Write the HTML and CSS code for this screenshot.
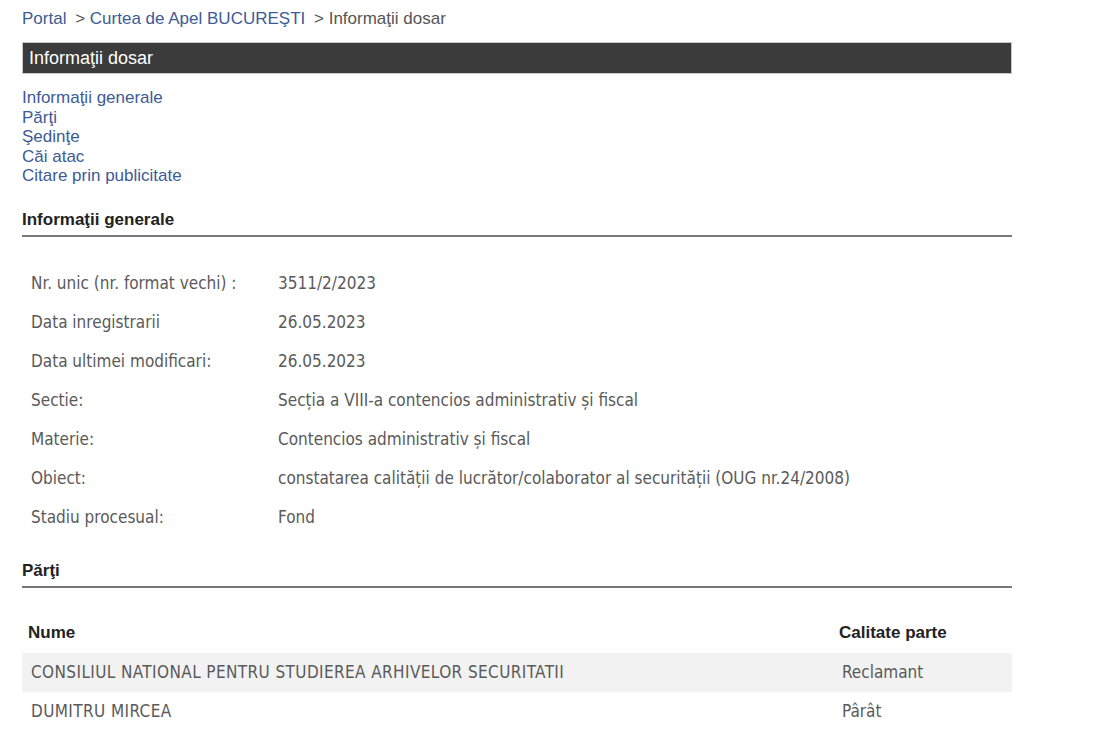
FILE: index.html
```html
<!DOCTYPE html>
<html lang="ro">
<head>
    <meta charset="UTF-8">
    <meta name="viewport" content="width=device-width, initial-scale=1.0">
    <title>Informaţii dosar</title>
    <link rel="stylesheet" href="styles.css">
</head>
<body>
    <div class="page">
        <div class="breadcrumb">
            <a href="#">Portal</a>
            <span class="sep">&gt;</span> <a href="#">Curtea de Apel BUCUREŞTI</a>
            <span class="sep">&gt;</span> <span class="current">Informaţii dosar</span>
        </div>

        <div class="title-bar">Informaţii dosar</div>

        <ul class="anchors">
            <li><a href="#generale">Informaţii generale</a></li>
            <li><a href="#parti">Părţi</a></li>
            <li><a href="#sedinte">Şedinţe</a></li>
            <li><a href="#cai">Căi atac</a></li>
            <li><a href="#citare">Citare prin publicitate</a></li>
        </ul>

        <h2 class="section-title" id="generale">Informaţii generale</h2>
        <table class="details">
            <tr><td class="label">Nr. unic (nr. format vechi) :</td><td>3511/2/2023</td></tr>
            <tr><td class="label">Data inregistrarii</td><td>26.05.2023</td></tr>
            <tr><td class="label">Data ultimei modificari:</td><td>26.05.2023</td></tr>
            <tr><td class="label">Sectie:</td><td>Secția a VIII-a contencios administrativ și fiscal</td></tr>
            <tr><td class="label">Materie:</td><td>Contencios administrativ și fiscal</td></tr>
            <tr><td class="label">Obiect:</td><td>constatarea calității de lucrător/colaborator al securității (OUG nr.24/2008)</td></tr>
            <tr><td class="label">Stadiu procesual:</td><td>Fond</td></tr>
        </table>

        <h2 class="section-title" id="parti">Părţi</h2>
        <table class="parties">
            <thead>
                <tr><th>Nume</th><th class="col-role">Calitate parte</th></tr>
            </thead>
            <tbody>
                <tr class="odd"><td class="col-name">CONSILIUL NATIONAL PENTRU STUDIEREA ARHIVELOR SECURITATII</td><td class="col-role">Reclamant</td></tr>
                <tr><td class="col-name">DUMITRU MIRCEA</td><td class="col-role">Pârât</td></tr>
            </tbody>
        </table>
    </div>
</body>
</html>
```

FILE: styles.css
```css
body { margin: 0; background: #fff; font-family: "Liberation Sans", Arial, sans-serif; font-size: 17px; color: #333; }
.page { width: 990px; padding: 8px 0 0 22px; }
a { color: #3d5b95; text-decoration: none; }

.breadcrumb { line-height: 22px; color: #555; }
.breadcrumb .sep { margin-left: 4px; }
.breadcrumb .current { color: #555; }

.title-bar { margin-top: 12px; height: 30px; line-height: 30px; padding-left: 6px; background: #3b3b3b; color: #fff; font-size: 18px; border: 1px solid #c8c8c8; }

.anchors { list-style: none; margin: 14px 0 0; padding: 0; line-height: 19.5px; }

.section-title { margin: 24px 0 0; padding-bottom: 5px; line-height: 20px; font-size: 17px; font-weight: bold; color: #222; border-bottom: 2px solid #777; }

.details, .parties { width: 100%; border-collapse: collapse; font-family: "DejaVu Sans Condensed", "Liberation Sans", sans-serif; font-size: 17px; color: #5a5a5a; }
.details { margin-top: 27px; margin-bottom: 24px; }
.details td { height: 39px; padding: 0 0 0 9px; }
.details td.label { width: 238px; }

.parties { margin-top: 25px; }
.parties th { height: 40px; text-align: left; padding: 0 0 0 6px; font-family: "Liberation Sans", Arial, sans-serif; font-weight: bold; font-size: 17px; color: #222; }
.parties td { height: 39px; padding: 0 0 0 9px; }
.parties td.col-name { letter-spacing: 0.4px; }
.parties .col-role { width: 170px; }
.parties tr.odd td { background: #f2f2f2; }
```
